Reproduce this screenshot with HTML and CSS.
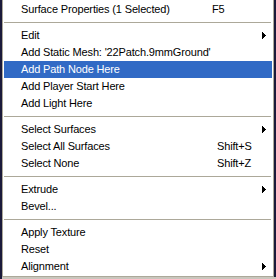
FILE: index.html
```html
<!DOCTYPE html>
<html lang="en">
<head>
    <meta charset="UTF-8">
    <meta name="viewport" content="width=device-width, initial-scale=1.0">
    <title>Viewport Menu</title>
    <link rel="stylesheet" href="styles.css">
</head>
<body>
    <div class="context-menu">
        <div class="menu-item">
            <span class="label">Surface Properties (1 Selected)</span>
            <span class="key">F5</span>
        </div>
        <div class="separator"></div>
        <div class="menu-item">
            <span class="label">Edit</span>
            <span class="key"></span>
            <svg class="arrow" width="4" height="7" viewBox="0 0 4 7"><path d="M0 0h1v1h1v1h1v1h1v1h-1v1h-1v1h-1v1h-1z"/></svg>
        </div>
        <div class="menu-item">
            <span class="label">Add Static Mesh: '22Patch.9mmGround'</span>
        </div>
        <div class="menu-item selected">
            <span class="label">Add Path Node Here</span>
        </div>
        <div class="menu-item">
            <span class="label">Add Player Start Here</span>
        </div>
        <div class="menu-item">
            <span class="label">Add Light Here</span>
        </div>
        <div class="separator"></div>
        <div class="menu-item">
            <span class="label">Select Surfaces</span>
            <span class="key"></span>
            <svg class="arrow" width="4" height="7" viewBox="0 0 4 7"><path d="M0 0h1v1h1v1h1v1h1v1h-1v1h-1v1h-1v1h-1z"/></svg>
        </div>
        <div class="menu-item">
            <span class="label">Select All Surfaces</span>
            <span class="key shift">Shift+S</span>
        </div>
        <div class="menu-item">
            <span class="label">Select None</span>
            <span class="key shift">Shift+Z</span>
        </div>
        <div class="separator"></div>
        <div class="menu-item">
            <span class="label">Extrude</span>
            <span class="key"></span>
            <svg class="arrow" width="4" height="7" viewBox="0 0 4 7"><path d="M0 0h1v1h1v1h1v1h1v1h-1v1h-1v1h-1v1h-1z"/></svg>
        </div>
        <div class="menu-item">
            <span class="label">Bevel...</span>
        </div>
        <div class="separator"></div>
        <div class="menu-item">
            <span class="label">Apply Texture</span>
        </div>
        <div class="menu-item">
            <span class="label">Reset</span>
        </div>
        <div class="menu-item">
            <span class="label">Alignment</span>
            <span class="key"></span>
            <svg class="arrow" width="4" height="7" viewBox="0 0 4 7"><path d="M0 0h1v1h1v1h1v1h1v1h-1v1h-1v1h-1v1h-1z"/></svg>
        </div>
    </div>
    <div class="status-strip"></div>
</body>
</html>
```

FILE: styles.css
```css
/* Page behind the menu (editor viewport) */
body {
    margin: 0;
    padding: 0;
    width: 276px;
    height: 279px;
    overflow: hidden;
    background-color: #1b1a3a;
    font-family: 'Liberation Sans', Arial, sans-serif;
    font-size: 11px;
}

/* Popup menu */
.context-menu {
    width: 272px;
    box-sizing: border-box;
    margin: -1px 0 0 2px;
    padding: 1px;
    background-color: #ffffff;
    border: 1px solid #aca899;
}

.menu-item {
    display: grid;
    grid-template-columns: 191px 1fr 4px;
    align-items: center;
    height: 17px;
    line-height: 17px;
    padding: 0 6px 0 17px;
    color: #000000;
    letter-spacing: -0.15px;
    white-space: nowrap;
}

.menu-item.selected {
    background-color: #316ac5;
    color: #ffffff;
}

.key.shift {
    padding-left: 5px;
}

.arrow {
    display: block;
    fill: #000000;
    shape-rendering: crispEdges;
}

/* Separator line */
.separator {
    height: 1px;
    margin: 4px 1px 4px 0;
    background-color: #aca899;
}

/* Bit of the window below the menu */
.status-strip {
    height: 3px;
    margin-left: 2px;
    background-color: #c9c6bd;
}
```
